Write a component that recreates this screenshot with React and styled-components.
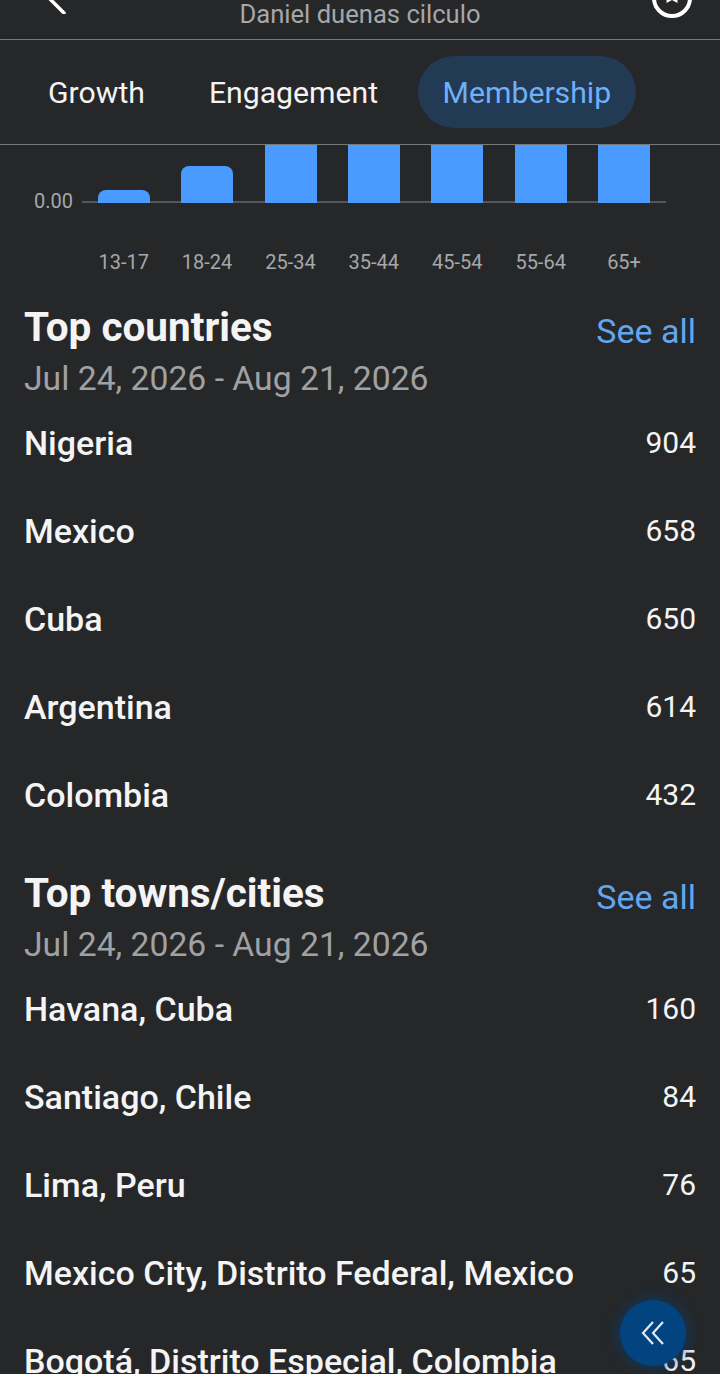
import React from 'react';
import styled, { createGlobalStyle } from 'styled-components';

const Global = createGlobalStyle`
html, body { margin:0; padding:0; background:#262729; }
body { font-family:Roboto, "Noto Sans", sans-serif; overflow:hidden; }
`;

const Page = styled.div`
width:720px;
height:1374px;
overflow:hidden;
position:relative;
background:#262729;
color:#fff;`;

const Header = styled.div`
height:39px;
display:flex;
align-items:flex-end;
justify-content:space-between;
padding:0 26px 0 36px;
overflow:hidden;
border-bottom:1px solid #77787a;`;

const Subtitle = styled.div`
font-size:25.6px;
line-height:32px;
margin-bottom:9px;
color:#a6a7a9;`;

const BackIcon = styled.svg`
width:34px;
height:34px;
flex:none;
margin-bottom:25px;`;

const SaveIcon = styled.svg`
width:44px;
height:44px;
flex:none;
margin-bottom:19px;`;

const Tabs = styled.div`
height:104px;
display:flex;
align-items:center;
padding:0 0 0 24px;
border-bottom:1px solid #77787a;`;

const Tab = styled.div`
height:72px;
display:flex;
align-items:center;
padding:0 ${p => p.$active ? 24.5 : 24}px;
margin-right:${p => p.$gap}px;
border-radius:36px;
font-size:30.2px;
color:${p => p.$active ? '#6fb0f8' : '#f4f4f5'};
background:${p => p.$active ? '#233a55' : 'transparent'};`;

const Chart = styled.div`
height:160px;
display:flex;
flex-direction:column;`;

const Plot = styled.div`
height:58px;
flex:none;
display:flex;
align-items:flex-end;
padding-left:34px;`;

const AxisValue = styled.div`
width:48px;
flex:none;
font-size:20px;
line-height:24px;
margin-bottom:-10px;
color:#a6a7a9;`;

const Bars = styled.div`
width:584px;
height:100%;
box-sizing:border-box;
padding:0 16px;
display:flex;
align-items:flex-end;
justify-content:space-between;
overflow:hidden;
background:linear-gradient(#55565a, #55565a) bottom 0 left 0 / 100% 2px no-repeat;`;

const Bar = styled.div`
width:52px;
background:#4a9bff;
border-radius:${p => p.$tall ? '0' : '8px 8px 0 0'};`;

const AgeLabels = styled.div`
display:grid;
grid-template-columns:repeat(7, 83.4px);
padding:45px 0 0 82px;`;

const AgeLabel = styled.div`
font-size:20px;
line-height:28px;
text-align:center;
color:#a6a7a9;`;

const Section = styled.div`
padding:0 24px;
margin-bottom:${p => p.$gap}px;`;

const SectionHead = styled.div`
display:flex;
justify-content:space-between;
align-items:flex-start;`;

const Title = styled.div`
font-size:40.5px;
line-height:44px;
font-weight:700;
color:#f4f4f5;`;

const SeeAll = styled.div`
font-size:34px;
line-height:44px;
margin-top:4px;
color:#62a6f0;`;

const DateRange = styled.div`
font-size:33.7px;
line-height:44px;
margin-top:4px;
color:#a0a1a3;`;

const Rows = styled.div`
margin-top:-2px;`;

const Row = styled.div`
height:88px;
display:flex;
justify-content:space-between;
align-items:center;`;

const RowName = styled.div`
font-size:34px;
font-weight:500;
color:#f4f4f5;`;

const RowValue = styled.div`
font-size:30px;
margin-bottom:2px;
color:#f4f4f5;`;

const Fab = styled.div`
position:absolute;
left:620px;
top:1300px;
width:66px;
height:66px;
border-radius:50%;
background:#024480;
box-shadow:0 0 12px 5px rgba(2,68,128,0.4);
display:flex;
align-items:center;
justify-content:center;`;

const ages = ['13-17', '18-24', '25-34', '35-44', '45-54', '55-64', '65+'];
const barHeights = [13, 37, 58, 58, 58, 58, 58];

const countries = [['Nigeria', 904], ['Mexico', 658], ['Cuba', 650], ['Argentina', 614], ['Colombia', 432]];
const cities = [
  ['Havana, Cuba', 160],
  ['Santiago, Chile', 84],
  ['Lima, Peru', 76],
  ['Mexico City, Distrito Federal, Mexico', 65],
  ['Bogotá, Distrito Especial, Colombia', 65],
];

const TopList = ({ title, items, gap }) => (
  <Section $gap={gap}>
    <SectionHead>
      <Title>{title}</Title>
      <SeeAll>See all</SeeAll>
    </SectionHead>
    <DateRange>Jul 24, 2026 - Aug 21, 2026</DateRange>
    <Rows>
      {items.map(([name, value]) => (
        <Row key={name}>
          <RowName>{name}</RowName>
          <RowValue>{value}</RowValue>
        </Row>
      ))}
    </Rows>
  </Section>
);

const App = () => (
  <Page>
    <Global />
    <Header>
      <BackIcon viewBox="0 0 34 34" fill="none" stroke="#fff" strokeWidth="3.5" strokeLinecap="round">
        <path d="M28 33 L12 17 L28 1" />
      </BackIcon>
      <Subtitle>Daniel duenas cilculo</Subtitle>
      <SaveIcon viewBox="0 0 44 44" fill="none" stroke="#fff" strokeWidth="4">
        <circle cx="22" cy="22" r="18" />
        <path d="M16.5 10 H27.5 V27 L22 24 L16.5 27 Z" fill="#fff" stroke="none" />
      </SaveIcon>
    </Header>
    <Tabs>
      <Tab $gap={16}>Growth</Tab>
      <Tab $gap={16}>Engagement</Tab>
      <Tab $active>Membership</Tab>
    </Tabs>
    <Chart>
      <Plot>
        <AxisValue>0.00</AxisValue>
        <Bars>
          {barHeights.map((h, i) => (
            <Bar key={ages[i]} $tall={h === 58} style={{ height: h }} />
          ))}
        </Bars>
      </Plot>
      <AgeLabels>
        {ages.map(a => <AgeLabel key={a}>{a}</AgeLabel>)}
      </AgeLabels>
    </Chart>
    <TopList title="Top countries" items={countries} gap={32} />
    <TopList title="Top towns/cities" items={cities} gap={0} />
    <Fab>
      <svg width="28" height="28" viewBox="0 0 28 28" fill="none" stroke="#dfeaf5" strokeWidth="2.2">
        <path d="M14 3 L4 14 L14 25" />
        <path d="M24 3 L14 14 L24 25" />
      </svg>
    </Fab>
  </Page>
);

export default App;
